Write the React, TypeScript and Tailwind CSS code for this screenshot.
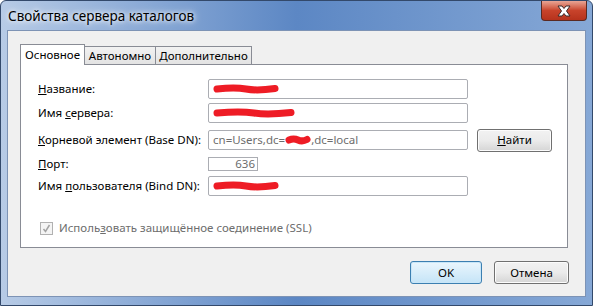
import React from "react";

const FONT = { fontFamily: '"Noto Sans", "Open Sans", sans-serif' };

// Red marker scribble that hides private values in the screenshot.
function Scribble({ w, h = 10 }: { w: number; h?: number }) {
  return (
    <svg width={w} height={h} viewBox={`0 0 ${w} ${h}`} className="absolute">
      <path
        d={`M4 ${h / 2} Q ${w / 3} ${h / 2 - 2} ${w / 2} ${h / 2} T ${w - 4} ${h / 2 - 0.5}`}
        stroke="#ee1c25"
        strokeWidth={h - 3}
        strokeLinecap="round"
        fill="none"
      />
    </svg>
  );
}

function Field({ children, className = "" }: { children?: React.ReactNode; className?: string }) {
  return (
    <div
      className={`relative flex h-[20px] w-[260px] items-center whitespace-nowrap rounded-[2px] border border-[#abadb3] bg-white px-[4px] text-[11.5px] text-[#6d6d6d] ${className}`}
    >
      {children}
    </div>
  );
}

function Btn({ children, className = "", def = false }: { children: React.ReactNode; className?: string; def?: boolean }) {
  return (
    <div
      className={`flex h-[23px] items-center justify-center rounded-[3px] border text-[11.5px] text-black ${
        def
          ? "border-[#3c7fb1] bg-gradient-to-b from-[#eaf6fd] to-[#c5e4f7] shadow-[inset_0_0_0_1px_#c8e6f8]"
          : "border-[#707070] bg-gradient-to-b from-[#f2f2f2] via-[#ebebeb] to-[#d5d5d5] shadow-[inset_0_0_0_1px_#fcfcfc]"
      } ${className}`}
    >
      {children}
    </div>
  );
}

export default function App() {
  return (
    <div className="h-[306px] w-[593px] bg-white" style={FONT}>
      <div className="flex h-[306px] w-[593px] flex-col rounded-t-[6px] border border-[#33496b] bg-gradient-to-r from-[#b7cbe6] via-[#5c87c4] to-[#86a8d6]">
        {/* title bar */}
        <div className="flex h-[29px] shrink-0 items-start justify-between">
          <span className="whitespace-nowrap pl-[7px] pt-[6px] text-[13.5px] leading-[18px] text-black [text-shadow:0_0_8px_#ffffff,0_0_4px_#ffffff]">
            Свойства сервера каталогов
          </span>
          <div className="mr-[5px] flex h-[20px] w-[46px] items-center justify-center rounded-b-[4px] border border-t-0 border-[#5a2a22] bg-gradient-to-b from-[#e8a595] via-[#c8432b] to-[#b6321c]">
            <svg width="14" height="12" viewBox="0 0 14 12">
              <path
                d="M1 1 H5 L7 3.5 L9 1 H13 L9.5 6 L13 11 H9 L7 8.5 L5 11 H1 L4.5 6 Z"
                fill="#ffffff"
                stroke="#3b2a2a"
                strokeWidth="1"
                strokeLinejoin="round"
              />
            </svg>
          </div>
        </div>

        {/* client area */}
        <div className="mx-[6px] mb-[8px] flex flex-1 flex-col border border-[#7d93b5] bg-[#f0f0f0] px-[12px] pt-[12px]">
          {/* tabs */}
          <div className="flex h-[21px] items-end text-[11.5px] text-black">
            <div className="relative z-10 -mb-px flex h-[21px] w-[65px] items-center justify-center border border-b-0 border-[#898c95] bg-white">
              Основное
            </div>
            <div className="flex h-[18px] w-[71px] items-center justify-center border border-b-0 border-l-0 border-[#898c95] bg-gradient-to-b from-[#f2f2f2] to-[#e3e3e3]">
              Автономно
            </div>
            <div className="flex h-[18px] w-[96px] items-center justify-center border border-b-0 border-l-0 border-[#898c95] bg-gradient-to-b from-[#f2f2f2] to-[#e3e3e3]">
              Дополнительно
            </div>
          </div>

          {/* panel */}
          <div className="flex h-[184px] w-[548px] flex-col whitespace-nowrap border border-[#898c95] bg-white pl-[17px] pt-[14px] text-[11.5px] text-black">
            <div className="flex h-[20px] items-center">
              <span className="w-[170px]">
                <u>Н</u>азвание:
              </span>
              <Field>
                <Scribble w={66} />
              </Field>
            </div>
            <div className="mt-[4px] flex h-[20px] items-center">
              <span className="w-[170px]">
                Имя <u>с</u>ервера:
              </span>
              <Field>
                <Scribble w={82} />
              </Field>
            </div>
            <div className="mt-[7px] flex h-[20px] items-center">
              <span className="w-[170px]">
                <u>К</u>орневой элемент (Base DN):
              </span>
              <Field>
                cn=Users,dc=
                <span className="relative inline-block h-[10px] w-[26px]">
                  <Scribble w={26} />
                </span>
                ,dc=local
              </Field>
              <Btn className="ml-[9px] w-[75px]">
                <span>
                  <u>Н</u>айти
                </span>
              </Btn>
            </div>
            <div className="mt-[7px] flex h-[14px] items-center">
              <span className="w-[170px]">
                <u>П</u>орт:
              </span>
              <div className="flex h-[14px] w-[50px] items-center justify-end border border-[#abadb3] bg-white pr-[2px] text-[11.5px] text-[#6d6d6d]">
                636
              </div>
            </div>
            <div className="mt-[5px] flex h-[20px] items-center">
              <span className="w-[170px]">
                Имя <u>п</u>ользователя (Bind DN):
              </span>
              <Field>
                <Scribble w={66} />
              </Field>
            </div>
            <div className="mt-[25px] flex h-[14px] items-center pl-[2px] text-[#6d6d6d]">
              <div className="flex h-[13px] w-[13px] items-center justify-center border border-[#b1b1b1] bg-[#f4f4f4]">
                <svg width="9" height="9" viewBox="0 0 9 9">
                  <path d="M1.5 5 L3.5 7.5 L7.5 1" stroke="#a3a3a3" strokeWidth="1.5" fill="none" />
                </svg>
              </div>
              <span className="ml-[6px]">
                Исполь<u>з</u>овать защищённое соединение (SSL)
              </span>
            </div>
          </div>

          {/* bottom buttons */}
          <div className="mt-[13px] flex justify-end gap-[12px] pr-[4px]">
            <Btn def className="w-[72px]">
              OK
            </Btn>
            <Btn className="w-[75px]">Отмена</Btn>
          </div>
        </div>
      </div>
    </div>
  );
}
